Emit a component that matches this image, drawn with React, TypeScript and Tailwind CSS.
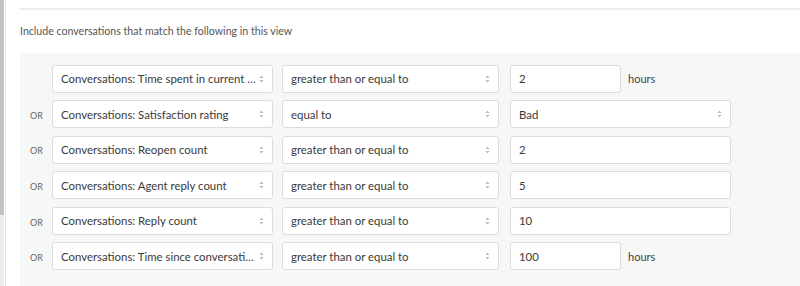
import React from "react";

type Row = {
  field: string;
  op: string;
  value: string;
  kind: "input" | "select" | "hours";
};

const rows: Row[] = [
  { field: "Conversations: Time spent in current …", op: "greater than or equal to", value: "2", kind: "hours" },
  { field: "Conversations: Satisfaction rating", op: "equal to", value: "Bad", kind: "select" },
  { field: "Conversations: Reopen count", op: "greater than or equal to", value: "2", kind: "input" },
  { field: "Conversations: Agent reply count", op: "greater than or equal to", value: "5", kind: "input" },
  { field: "Conversations: Reply count", op: "greater than or equal to", value: "10", kind: "input" },
  { field: "Conversations: Time since conversati…", op: "greater than or equal to", value: "100", kind: "hours" },
];

const Arrows = () => (
  <svg width="5" height="8" viewBox="0 0 5 8" className="shrink-0">
    <path d="M2.5 0.5 L4.5 3 L0.5 3 Z" fill="#b8b8b8" />
    <path d="M2.5 7.5 L4.5 5 L0.5 5 Z" fill="#b8b8b8" />
  </svg>
);

const SelectBox = ({ label, className }: { label: string; className: string }) => (
  <div
    className={`h-[28px] flex items-center justify-between pl-[8px] pr-[8px] bg-white border border-[#dcdcdc] rounded-[3px] text-[#3a3a3a] ${className}`}
  >
    <span className="whitespace-nowrap">{label}</span>
    <Arrows />
  </div>
);

const InputBox = ({ value, className }: { value: string; className: string }) => (
  <div
    className={`h-[28px] flex items-center pl-[8px] bg-white border border-[#dcdcdc] rounded-[3px] text-[#3a3a3a] ${className}`}
  >
    {value}
  </div>
);

export default function App() {
  return (
    <div
      className="w-[800px] h-[286px] bg-white flex overflow-hidden"
      style={{ fontFamily: "Lato, 'Noto Sans', sans-serif" }}
    >
      <div className="w-[4px] flex flex-col shrink-0">
        <div className="h-[215px] bg-[#c2c2c2]" />
        <div className="flex-1 bg-[#ececec]" />
      </div>
      <div className="w-[1px] bg-[#e6e6e6] shrink-0 ml-[1px]" />
      <div className="flex-1 flex flex-col pl-[14px]">
        <div className="mt-[8px] h-[1.5px] bg-[#ececec]" />
        <div className="mt-[13px] text-[10.6px] text-[#555] leading-[16px]">
          Include conversations that match the following in this view
        </div>
        <div className="mt-[14px] flex-1 bg-[#f6f7f7] pt-[12px] flex flex-col gap-[7.6px] text-[11.4px]">
          {rows.map((r, i) => (
            <div key={i} className="flex items-center">
              <div className="w-[32px] shrink-0 text-[9px] text-[#666] text-center pl-[1px] pt-[3px]">
                {i === 0 ? "" : "OR"}
              </div>
              <SelectBox label={r.field} className="w-[221px] shrink-0" />
              <SelectBox label={r.op} className="w-[217px] shrink-0 ml-[9px]" />
              {r.kind === "select" ? (
                <SelectBox label={r.value} className="w-[221px] shrink-0 ml-[11px]" />
              ) : r.kind === "input" ? (
                <InputBox value={r.value} className="w-[221px] shrink-0 ml-[11px]" />
              ) : (
                <>
                  <InputBox value={r.value} className="w-[111px] shrink-0 ml-[11px]" />
                  <span className="ml-[7px] text-[#444] text-[11px] pt-[2px]">hours</span>
                </>
              )}
            </div>
          ))}
        </div>
      </div>
    </div>
  );
}
